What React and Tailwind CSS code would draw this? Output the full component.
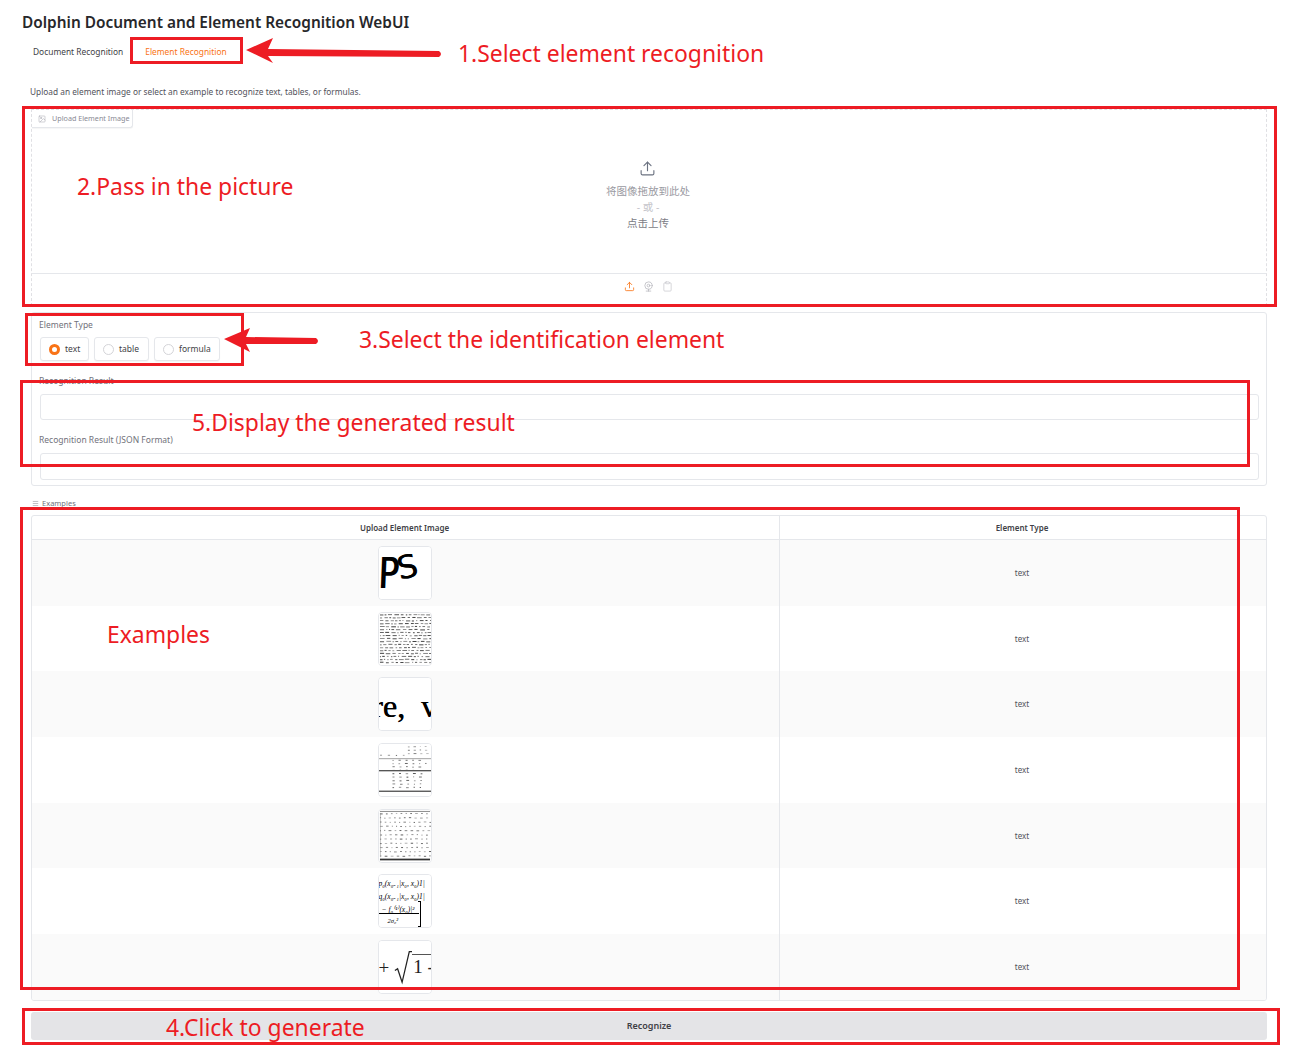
import React from "react";
import { Upload, Webcam, Clipboard, Image as ImageIcon, Menu } from "lucide-react";

const rand = (seed) => {
  let s = seed;
  return () => {
    s = (s * 9301 + 49297) % 233280;
    return s / 233280;
  };
};

// tiny dashes that stand in for the scaled-down page scans
const Dashes = ({ seed, top, bottom, rowGap, colGap = 0, opacity = 0.85, from = 1, to = 53 }) => {
  const r = rand(seed);
  const items = [];
  for (let y = top; y < bottom; y += rowGap) {
    let x = from;
    while (x < to) {
      const w = colGap ? 1 + r() * 2 : 1 + r() * 4;
      items.push(<rect key={`${y}-${x}`} x={x} y={y + r() * 0.6} width={w} height={1} fill="#111" opacity={opacity - r() * 0.4} />);
      x += w + (colGap ? colGap : 1 + r() * 1.8);
    }
  }
  return items;
};

const ThumbPs = () => (
  <div className="flex h-full items-start overflow-hidden bg-white text-black font-['DejaVu_Sans',sans-serif]">
    <span className="mt-[5px] origin-top scale-y-125 -skew-x-3 text-[34px] leading-none [text-shadow:1px_0_0_#000]">P</span>
    <span className="-ml-[2px] mt-[4px] -rotate-12 text-[32px] leading-none [text-shadow:0.6px_0_0_#000]">S</span>
  </div>
);

const ThumbPage = () => (
  <svg viewBox="0 0 54 54" className="block h-full w-full bg-white">
    <Dashes seed={11} top={1} bottom={52} rowGap={3.1} />
  </svg>
);

const ThumbWord = () => (
  <div className="flex h-full items-center justify-center overflow-hidden whitespace-nowrap bg-white pt-[4px] text-[32px] text-black font-['Liberation_Serif',serif] [text-shadow:0.5px_0_0_#000]">
    re,&nbsp;&nbsp;v
  </div>
);

const ThumbTable = () => (
  <svg viewBox="0 0 54 54" className="block h-full w-full bg-white">
    <Dashes seed={5} top={2} bottom={10} rowGap={3.5} colGap={4} opacity={0.6} from={30} />
    <Dashes seed={9} top={11} bottom={14} rowGap={4} colGap={6} opacity={0.7} from={1} to={26} />
    <Dashes seed={23} top={16} bottom={27} rowGap={3.5} colGap={5} opacity={0.8} from={14} to={48} />
    <Dashes seed={31} top={30} bottom={47} rowGap={3.6} colGap={5} opacity={0.8} from={14} to={48} />
    <rect x="0" y="15" width="54" height="0.7" fill="#777" />
    <rect x="0" y="27" width="54" height="1.4" fill="#555" />
    <rect x="0" y="48.5" width="54" height="1" fill="#111" />
  </svg>
);

const ThumbGrid = () => (
  <svg viewBox="0 0 54 54" className="block h-full w-full bg-white">
    <rect x="1" y="1" width="52" height="0.7" fill="#555" />
    <Dashes seed={17} top={3} bottom={48} rowGap={4.4} colGap={3.4} opacity={0.7} />
    <rect x="1" y="3" width="0.5" height="46" fill="#888" />
    <rect x="1" y="50.5" width="52" height="1.8" fill="#333" />
  </svg>
);

const ThumbFormula = () => (
  <div className="relative flex h-full flex-col overflow-hidden whitespace-nowrap bg-white pt-[2px] text-[7.5px] leading-[13px] text-black font-['Liberation_Serif',serif] italic">
    <span>p₀(x₀₋₁|x₀, x₀)1|</span>
    <span>q₀(x₀₋₁|x₀, x₀)1|</span>
    <span className="pl-[3px]">− f₀⁽¹⁾(x₀)|²</span>
    <span className="pl-[9px] text-[6.5px] leading-[9px]">2σ₀²</span>
    <div className="absolute left-0 top-[38px] h-[1px] w-[40px] bg-black" />
    <div className="absolute left-[39px] top-[26px] h-[26px] w-[3px] border-y border-r border-black" />
  </div>
);

const ThumbRoot = () => (
  <div className="relative flex h-full items-center overflow-hidden whitespace-nowrap bg-white text-[19px] text-[#222] font-['Liberation_Serif',serif]">
    <span className="pt-[3px]">+</span>
    <svg viewBox="0 0 20 40" className="ml-[5px] h-[40px] w-[18px] shrink-0" fill="none" stroke="#222">
      <path d="M1 24 L4 22 L9 37 L17 3 L20 3" strokeWidth="1.4" />
    </svg>
    <span className="mb-[2px] border-t border-[#555] pl-[1px] leading-[23px]">1 -</span>
  </div>
);

const rows = [ThumbPs, ThumbPage, ThumbWord, ThumbTable, ThumbGrid, ThumbFormula, ThumbRoot];

const Radio = ({ label, checked, width }) => (
  <div className={`flex h-[24px] ${width} items-center gap-[5px] rounded-[3px] border border-[#e5e7eb] bg-white pl-[8px] shadow-[0_1px_1px_rgba(0,0,0,0.04)]`}>
    {checked ? (
      <span className="h-[11px] w-[11px] rounded-full border-[3px] border-[#f97316] bg-white" />
    ) : (
      <span className="h-[11px] w-[11px] rounded-full border border-[#d4d4d8] bg-white" />
    )}
    <span className="text-[8.5px] text-[#3f3f46]">{label}</span>
  </div>
);

const Box = ({ className }) => <div className={`absolute border-[3px] border-[#ed1c24] ${className}`} />;

const Note = ({ className, children }) => (
  <div className={`absolute whitespace-nowrap text-[#ed1c24] leading-none ${className}`}>{children}</div>
);

export default function App() {
  return (
    <div className="relative h-[1053px] w-[1297px] overflow-hidden bg-white text-[#27272a] font-['Noto_Sans','Noto_Sans_CJK_SC',sans-serif]">
      <div className="pl-[22px] pt-[12px] text-[15.4px] font-semibold leading-[22px] text-[#27272a]">
        Dolphin Document and Element Recognition WebUI
      </div>

      <div className="mt-[9px] flex h-[18px] items-center pl-[33px] text-[8.4px]">
        <span className="text-[#3f3f46]">Document Recognition</span>
        <span className="ml-[22px] text-[#f97316]">Element Recognition</span>
      </div>

      <div className="mt-[24px] pl-[30px] text-[8.3px] leading-[14px] text-[#52525b]">
        Upload an element image or select an example to recognize text, tables, or formulas.
      </div>

      {/* upload box */}
      <div className="relative ml-[31px] mt-[10px] h-[197px] w-[1236px] border border-dashed border-[#e0e0e4]">
        <div className="absolute left-0 top-0 flex h-[18px] w-[101px] items-center gap-[6px] whitespace-nowrap rounded-br-[3px] border-b border-r border-[#e5e7eb] bg-white pl-[6px] text-[7.2px] text-[#8a8a94] shadow-[0_1px_1px_rgba(0,0,0,0.04)]">
          <ImageIcon size={8} strokeWidth={1.5} className="text-[#a1a1aa]" />
          Upload Element Image
        </div>
        <div className="flex h-[163px] flex-col items-center pr-[2px] pt-[50px]">
          <Upload size={17} strokeWidth={1.6} className="-ml-[2px] text-[#6b7280]" />
          <div className="mt-[6px] text-[10.5px] leading-[16px] text-[#9a9aa2]">将图像拖放到此处</div>
          <div className="text-[10.5px] leading-[16px] text-[#c4c4ca]">- 或 -</div>
          <div className="text-[10.5px] leading-[16px] text-[#7c7c85]">点击上传</div>
        </div>
        <div className="flex h-[32px] items-center justify-center gap-[8px] border-t border-[#e5e7eb] pb-[6px] pr-[2px]">
          <Upload size={11} strokeWidth={1.8} className="text-[#f97316]" />
          <Webcam size={11} strokeWidth={1.6} className="text-[#b4b4bb]" />
          <Clipboard size={11} strokeWidth={1.5} className="text-[#c4c4ca]" />
        </div>
      </div>

      {/* element type + results */}
      <div className="ml-[31px] mt-[6px] h-[174px] w-[1236px] rounded-[3px] border border-[#e5e7eb] px-[8px] pt-[5px]">
        <div className="-ml-[1px] text-[8.5px] leading-[13px] text-[#71717a]">Element Type</div>
        <div className="mt-[6px] flex gap-[5px]">
          <Radio label="text" checked width="w-[49px]" />
          <Radio label="table" width="w-[55px]" />
          <Radio label="formula" width="w-[66px]" />
        </div>
        <div className="-ml-[1px] mt-[13px] text-[8.5px] leading-[13px] text-[#71717a]">Recognition Result</div>
        <div className="mt-[7px] h-[26px] w-[1219px] rounded-[3px] border border-[#e5e7eb]" />
        <div className="-ml-[1px] mt-[13px] text-[8.5px] leading-[13px] text-[#71717a]">Recognition Result (JSON Format)</div>
        <div className="mt-[7px] h-[27px] w-[1219px] rounded-[3px] border border-[#e5e7eb]" />
      </div>

      <div className="ml-[32px] mt-[12px] flex h-[11px] items-center gap-[3px] text-[7.5px] text-[#71717a]">
        <Menu size={7} strokeWidth={1.5} />
        Examples
      </div>

      {/* examples table */}
      <div className="ml-[31px] mt-[6px] w-[1236px] overflow-hidden rounded-[3px] border border-[#e5e7eb]">
        <div className="flex h-[24px] items-center border-b border-[#e5e7eb] text-[8px] font-semibold text-[#3f3f46]">
          <div className="flex h-full w-[748px] items-center justify-center border-r border-[#e5e7eb] pr-[2px]">Upload Element Image</div>
          <div className="flex-1 pr-[2px] text-center">Element Type</div>
        </div>
        {rows.map((Thumb, i) => (
          <div key={i} className={`flex h-[65.7px] items-center ${i % 2 === 0 ? "bg-[#fafafa]" : "bg-white"}`}>
            <div className="flex h-full w-[748px] items-center justify-center border-r border-[#e5e7eb] pr-[2px]">
              <div className="h-[54px] w-[54px] overflow-hidden rounded-[4px] border border-[#e5e7eb] bg-white">
                <Thumb />
              </div>
            </div>
            <div className="flex-1 pr-[2px] text-center text-[8px] text-[#52525b]">text</div>
          </div>
        ))}
      </div>

      <div className="ml-[31px] mt-[11px] flex h-[28px] w-[1236px] items-center justify-center rounded-[3px] bg-[#e4e4e7] text-[9px] font-semibold text-[#3f3f46]">
        Recognize
      </div>

      {/* red annotations drawn over the page */}
      <Box className="left-[130px] top-[37px] h-[27px] w-[113px]" />
      <Box className="left-[22px] top-[106px] h-[201px] w-[1255px]" />
      <Box className="left-[25px] top-[313px] h-[53px] w-[219px]" />
      <Box className="left-[20px] top-[380px] h-[87px] w-[1230px]" />
      <Box className="left-[20px] top-[507px] h-[483px] w-[1220px]" />
      <Box className="left-[22px] top-[1008px] h-[37px] w-[1258px]" />

      <svg className="absolute left-0 top-0 h-[400px] w-[500px]" viewBox="0 0 500 400" fill="#ed1c24">
        <path d="M246 50 L273 38 L268 49 L439 51 Q443 54 439 57 L268 56 L273 63 Z" />
        <path d="M224 339 L250 328 L246 337 L316 338 Q320 341 316 344 L246 344 L250 352 Z" />
      </svg>

      <Note className="left-[458px] top-[43px] text-[22.9px]">1.Select element recognition</Note>
      <Note className="left-[77px] top-[176px] text-[22.9px]">2.Pass in the picture</Note>
      <Note className="left-[359px] top-[329px] text-[22.9px]">3.Select the identification element</Note>
      <Note className="left-[192px] top-[412px] text-[22.9px]">5.Display the generated result</Note>
      <Note className="left-[107px] top-[624px] text-[22.9px]">Examples</Note>
      <Note className="left-[166px] top-[1017px] text-[22.9px]">4.Click to generate</Note>
    </div>
  );
}
